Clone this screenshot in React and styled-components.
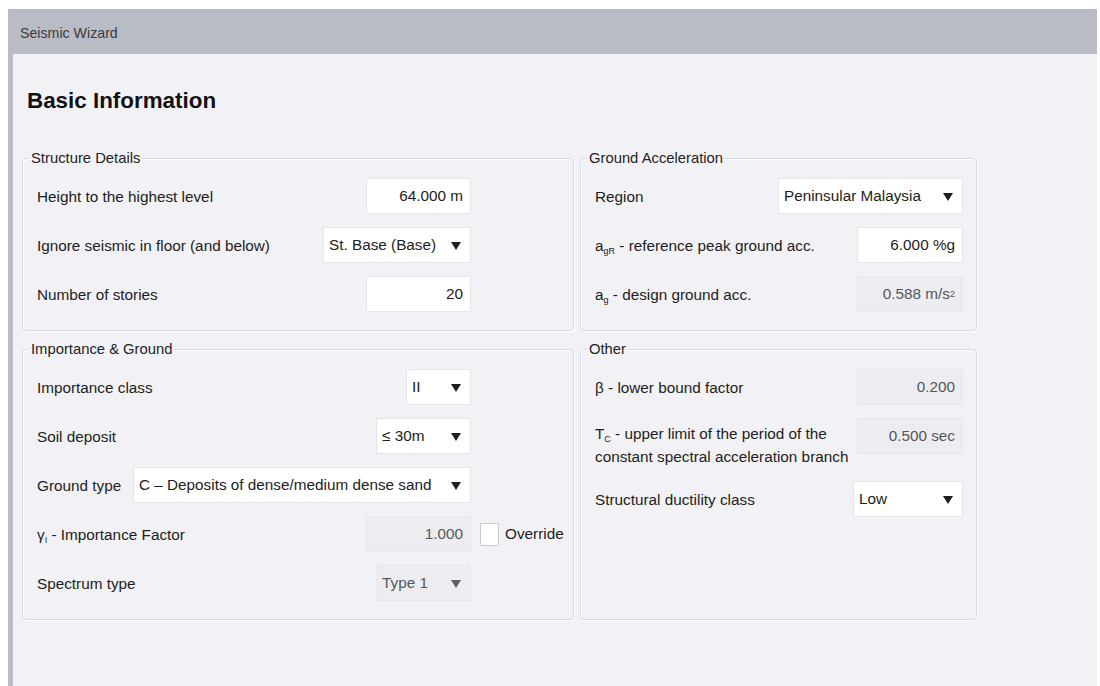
import React from 'react';
import styled, { createGlobalStyle } from 'styled-components';

const FONT = `"Liberation Sans", Arial, sans-serif`;
const TEXT_SIZE = '15.3px';

const Global = createGlobalStyle`
  html, body { background: #ffffff; }
  body { margin: 9px 3px 0 8px; font-family: ${FONT}; }
  * { box-sizing: border-box; }
`;

const Window = styled.div`
  display: flex;
  flex-direction: column;
  height: calc(100vh - 9px);
  overflow: hidden;
`;

const TitleBar = styled.div`
  height: 45px;
  flex: none;
  background: #b9bcc5;
  color: #3a3b40;
  font-size: 14.2px;
  display: flex;
  align-items: center;
  padding: 2px 0 0 12px;
`;

const Body = styled.div`
  flex: 1;
  background: #f2f2f6;
  border-left: 5px solid #b9bcc5;
  padding: 30px 0 0 9px;
`;

const Heading = styled.h1`
  margin: 0 0 30px 5px;
  font-size: 22.4px;
  line-height: 34px;
  font-weight: 700;
  color: #111114;
`;

const Grid = styled.div`
  display: grid;
  grid-template-columns: 552px 397px;
  column-gap: 6px;
  row-gap: 8px;
`;

const Group = styled.fieldset`
  margin: 0;
  min-width: 0;
  border: 1px solid #d8d9df;
  border-radius: 4px;
  box-shadow: inset 1px 1px 0 #ffffff, 1px 1px 0 #ffffff;
  padding: 10px ${(p) => p.$padRight}px 18px 14px;
`;

const Legend = styled.legend`
  margin-left: -8px;
  padding: 0 2px;
  font-size: 14.8px;
  line-height: 20px;
  color: #222226;
`;

const Rows = styled.div`
  display: flex;
  flex-direction: column;
  gap: 13px;
`;

const Row = styled.div`
  display: flex;
  align-items: ${(p) => (p.$top ? 'flex-start' : 'center')};
  min-height: ${(p) => (p.$tall ? 50 : 36)}px;
`;

const Label = styled.div`
  flex: 1;
  min-width: 0;
  font-size: ${TEXT_SIZE};
  line-height: 23px;
  color: #1d1d20;
  white-space: nowrap;
  padding-top: ${(p) => (p.$top ? 4 : 0)}px;

  sub {
    font-size: 9px;
    vertical-align: -3px;
    line-height: 0;
  }
`;

const Field = styled.div`
  flex: none;
  width: ${(p) => p.$w}px;
  height: 36px;
  background: ${(p) => (p.$disabled ? '#ededf1' : '#ffffff')};
  border: 1px solid ${(p) => (p.$disabled ? '#e8e8ec' : '#e5e5e9')};
  color: ${(p) => (p.$disabled ? '#55565b' : '#1d1d20')};
  font-size: ${TEXT_SIZE};
  display: flex;
  align-items: center;
  justify-content: flex-end;
  padding-right: 7px;
  white-space: nowrap;

  sup {
    font-size: 9px;
    vertical-align: 6px;
    line-height: 0;
  }
`;

const Select = styled.div`
  flex: none;
  width: ${(p) => p.$w}px;
  height: 36px;
  background: ${(p) => (p.$disabled ? '#ededf1' : '#ffffff')};
  border: 1px solid ${(p) => (p.$disabled ? '#e8e8ec' : '#e5e5e9')};
  color: ${(p) => (p.$disabled ? '#55565b' : '#1d1d20')};
  font-size: ${TEXT_SIZE};
  display: flex;
  align-items: center;
  justify-content: space-between;
  padding: 0 9px 0 5px;
  white-space: nowrap;
`;

const Caret = styled.span`
  flex: none;
  width: 0;
  height: 0;
  margin-top: 1px;
  border-left: 5px solid transparent;
  border-right: 5px solid transparent;
  border-top: 8px solid ${(p) => (p.$disabled ? '#5e5f64' : '#1f1f23')};
`;

const Trail = styled.div`
  flex: none;
  width: ${(p) => p.$w}px;
  display: flex;
  align-items: center;
  gap: 6px;
  padding-left: 9px;
  font-size: ${TEXT_SIZE};
  color: #1d1d20;
  white-space: nowrap;
`;

const CheckBox = styled.span`
  flex: none;
  width: 19px;
  height: 23px;
  background: #ffffff;
  border: 1px solid #c9c9cf;
  border-radius: 1px;
`;

const LEFT_TRAIL = 88;

function Dropdown({ w, value, disabled }) {
  return (
    <Select $w={w} $disabled={disabled}>
      <span>{value}</span>
      <Caret $disabled={disabled} />
    </Select>
  );
}

export default function App() {
  return (
    <>
      <Global />
      <Window>
        <TitleBar>Seismic Wizard</TitleBar>
        <Body>
          <Heading>Basic Information</Heading>
          <Grid>
            <Group $padRight={14}>
              <Legend>Structure Details</Legend>
              <Rows>
                <Row>
                  <Label>Height to the highest level</Label>
                  <Field $w={105}>64.000 m</Field>
                  <Trail $w={LEFT_TRAIL} />
                </Row>
                <Row>
                  <Label>Ignore seismic in floor (and below)</Label>
                  <Dropdown w={148} value="St. Base (Base)" />
                  <Trail $w={LEFT_TRAIL} />
                </Row>
                <Row>
                  <Label>Number of stories</Label>
                  <Field $w={105}>20</Field>
                  <Trail $w={LEFT_TRAIL} />
                </Row>
              </Rows>
            </Group>

            <Group $padRight={13}>
              <Legend>Ground Acceleration</Legend>
              <Rows>
                <Row>
                  <Label>Region</Label>
                  <Dropdown w={185} value="Peninsular Malaysia" />
                </Row>
                <Row>
                  <Label>
                    a<sub>gR</sub> - reference peak ground acc.
                  </Label>
                  <Field $w={106}>6.000 %g</Field>
                </Row>
                <Row>
                  <Label>
                    a<sub>g</sub> - design ground acc.
                  </Label>
                  <Field $w={106} $disabled>
                    0.588 m/s<sup>2</sup>
                  </Field>
                </Row>
              </Rows>
            </Group>

            <Group $padRight={14}>
              <Legend>Importance &amp; Ground</Legend>
              <Rows>
                <Row>
                  <Label>Importance class</Label>
                  <Dropdown w={65} value="II" />
                  <Trail $w={LEFT_TRAIL} />
                </Row>
                <Row>
                  <Label>Soil deposit</Label>
                  <Dropdown w={95} value="≤ 30m" />
                  <Trail $w={LEFT_TRAIL} />
                </Row>
                <Row>
                  <Label>Ground type</Label>
                  <Dropdown w={338} value="C – Deposits of dense/medium dense sand" />
                  <Trail $w={LEFT_TRAIL} />
                </Row>
                <Row>
                  <Label>
                    γ<sub>I</sub> - Importance Factor
                  </Label>
                  <Field $w={105} $disabled>
                    1.000
                  </Field>
                  <Trail $w={LEFT_TRAIL}>
                    <CheckBox />
                    <span>Override</span>
                  </Trail>
                </Row>
                <Row>
                  <Label>Spectrum type</Label>
                  <Dropdown w={95} value="Type 1" disabled />
                  <Trail $w={LEFT_TRAIL} />
                </Row>
              </Rows>
            </Group>

            <Group $padRight={13}>
              <Legend>Other</Legend>
              <Rows>
                <Row>
                  <Label>β - lower bound factor</Label>
                  <Field $w={106} $disabled>
                    0.200
                  </Field>
                </Row>
                <Row $top $tall>
                  <Label $top>
                    T<sub>C</sub> - upper limit of the period of the
                    <br />
                    constant spectral acceleration branch
                  </Label>
                  <Field $w={106} $disabled>
                    0.500 sec
                  </Field>
                </Row>
                <Row>
                  <Label>Structural ductility class</Label>
                  <Dropdown w={110} value="Low" />
                </Row>
              </Rows>
            </Group>
          </Grid>
        </Body>
      </Window>
    </>
  );
}
